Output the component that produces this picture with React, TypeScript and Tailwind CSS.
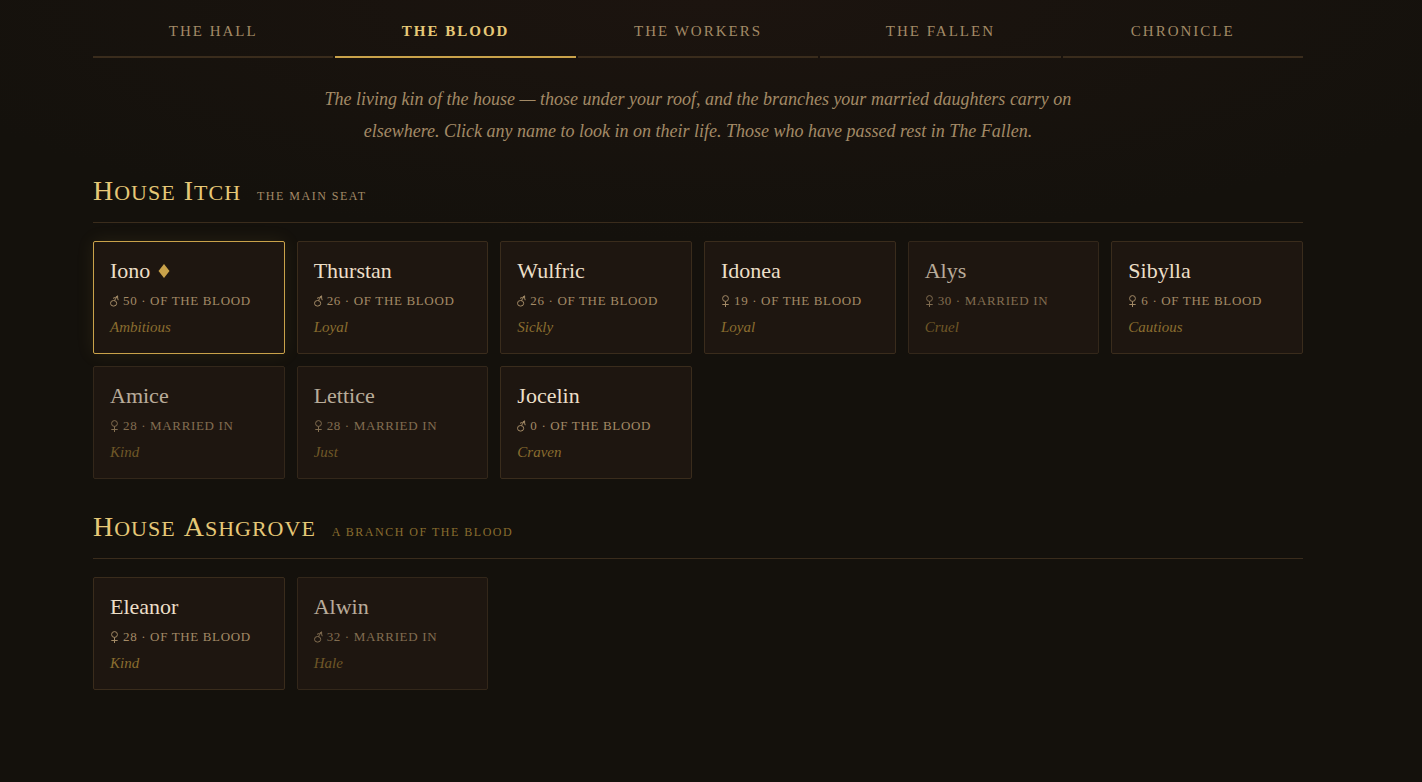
type Gender = '♂' | '♀';

interface Person {
  name: string;
  gender: Gender;
  age: number;
  trait: string;
  married?: boolean;
  head?: boolean;
}

interface House {
  title: string;
  note: string;
  main?: boolean;
  people: Person[];
}

const tabs = ['The Hall', 'The Blood', 'The Workers', 'The Fallen', 'Chronicle'];

const houses: House[] = [
  {
    title: 'House Itch',
    note: 'The main seat',
    main: true,
    people: [
      { name: 'Iono', gender: '♂', age: 50, trait: 'Ambitious', head: true },
      { name: 'Thurstan', gender: '♂', age: 26, trait: 'Loyal' },
      { name: 'Wulfric', gender: '♂', age: 26, trait: 'Sickly' },
      { name: 'Idonea', gender: '♀', age: 19, trait: 'Loyal' },
      { name: 'Alys', gender: '♀', age: 30, trait: 'Cruel', married: true },
      { name: 'Sibylla', gender: '♀', age: 6, trait: 'Cautious' },
      { name: 'Amice', gender: '♀', age: 28, trait: 'Kind', married: true },
      { name: 'Lettice', gender: '♀', age: 28, trait: 'Just', married: true },
      { name: 'Jocelin', gender: '♂', age: 0, trait: 'Craven' },
    ],
  },
  {
    title: 'House Ashgrove',
    note: 'A branch of the blood',
    people: [
      { name: 'Eleanor', gender: '♀', age: 28, trait: 'Kind' },
      { name: 'Alwin', gender: '♂', age: 32, trait: 'Hale', married: true },
    ],
  },
];

function GenderSign({ gender }: { gender: Gender }) {
  return (
    <svg viewBox="0 0 9 12" className="h-3 w-[9px] shrink-0" fill="none" stroke="currentColor" strokeWidth="1" role="img" aria-label={gender === '♂' ? 'male' : 'female'}>
      {gender === '♂' ? (
        <>
          <ellipse cx="3.6" cy="8.3" rx="3.1" ry="2.8" />
          <path d="M4.4 5.6 7.4 1M3 3.3C4.9 2.9 6.3 2.1 7.6 .8 7.4 2.4 7.6 3.8 8.2 5.2" />
        </>
      ) : (
        <>
          <circle cx="4.5" cy="3.5" r="2.9" />
          <path d="M4.5 6.4V12M1.3 9.5H7.7" />
        </>
      )}
    </svg>
  );
}

function PersonCard({ person }: { person: Person }) {
  return (
    <button
      type="button"
      className={`h-[113px] rounded-xs border bg-[#1e1610] px-4 pt-0.5 text-left ${
        person.head
          ? 'border-[#c9a24a] shadow-[0_0_18px_rgba(201,162,74,0.1)]'
          : person.married
            ? 'border-[#33271a]'
            : 'border-[#3a2c1c]'
      }`}
    >
      <span className={`flex flex-col items-start ${person.married ? 'opacity-75' : ''}`}>
        <span className="flex items-center gap-2 text-[22px] leading-7 text-[#ecdfc8]">
          {person.name}
          {person.head && (
            <svg viewBox="0 0 12 14" className="h-3.5 w-3" aria-hidden="true">
              <path d="M6 0 11.5 7 6 14 .5 7z" fill="#c9a24a" />
            </svg>
          )}
        </span>
        <span className="mt-1 flex items-center gap-1 text-[13px] leading-6 tracking-wider whitespace-nowrap text-[#a38a66]">
          <GenderSign gender={person.gender} />
          <span className="uppercase">
            {person.age} · {person.married ? 'Married in' : 'Of the blood'}
          </span>
        </span>
        <span className="text-[15px] leading-7 text-[#8a6d2f] italic">{person.trait}</span>
      </span>
    </button>
  );
}

function HouseSection({ house }: { house: House }) {
  return (
    <section>
      <header className="flex items-baseline gap-4 border-b border-[#3a2c1c] pb-[11px]">
        <h2 className="flex gap-2 text-[22px] leading-9 tracking-[1px] text-[#e6c877] uppercase">
          {house.title.split(' ').map((word) => (
            <span key={word} className="inline-block first-letter:text-[28px]">
              {word}
            </span>
          ))}
        </h2>
        <span className={`text-[12px] tracking-[1.5px] uppercase ${house.main ? 'text-[#a38a66]' : 'text-[#8a6d2f]'}`}>
          {house.note}
        </span>
      </header>
      <div className="mt-[18px] grid grid-cols-6 gap-3">
        {house.people.map((person) => (
          <PersonCard key={person.name} person={person} />
        ))}
      </div>
    </section>
  );
}

export default function App() {
  return (
    <div className="min-h-screen bg-[#14110c] bg-[radial-gradient(ellipse_60%_240px_at_top,#1c140f_0%,#14110c_100%)] pr-[26px] font-['Liberation_Serif',serif]">
      <main className="mx-auto max-w-[1210px] pb-16">
        <nav className="grid grid-cols-5 gap-0.5" aria-label="Sections">
          {tabs.map((tab) => (
            <button
              key={tab}
              type="button"
              className={`h-[58px] border-b-2 pt-1.5 text-[15px] tracking-[2px] uppercase ${
                tab === 'The Blood'
                  ? 'border-[#c9a24a] font-bold text-[#e6c877]'
                  : 'border-[#3a2c1c] text-[#a38a66]'
              }`}
            >
              {tab}
            </button>
          ))}
        </nav>
        <p className="mx-auto mt-[25px] max-w-[780px] text-center text-[18px] leading-8 text-[#a38a66] italic">
          The living kin of the house — those under your roof, and the branches your married daughters carry on
          elsewhere. Click any name to look in on their life. Those who have passed rest in The Fallen.
        </p>
        <div className="mt-[26px] flex flex-col gap-[30px]">
          {houses.map((house) => (
            <HouseSection key={house.title} house={house} />
          ))}
        </div>
      </main>
    </div>
  );
}
